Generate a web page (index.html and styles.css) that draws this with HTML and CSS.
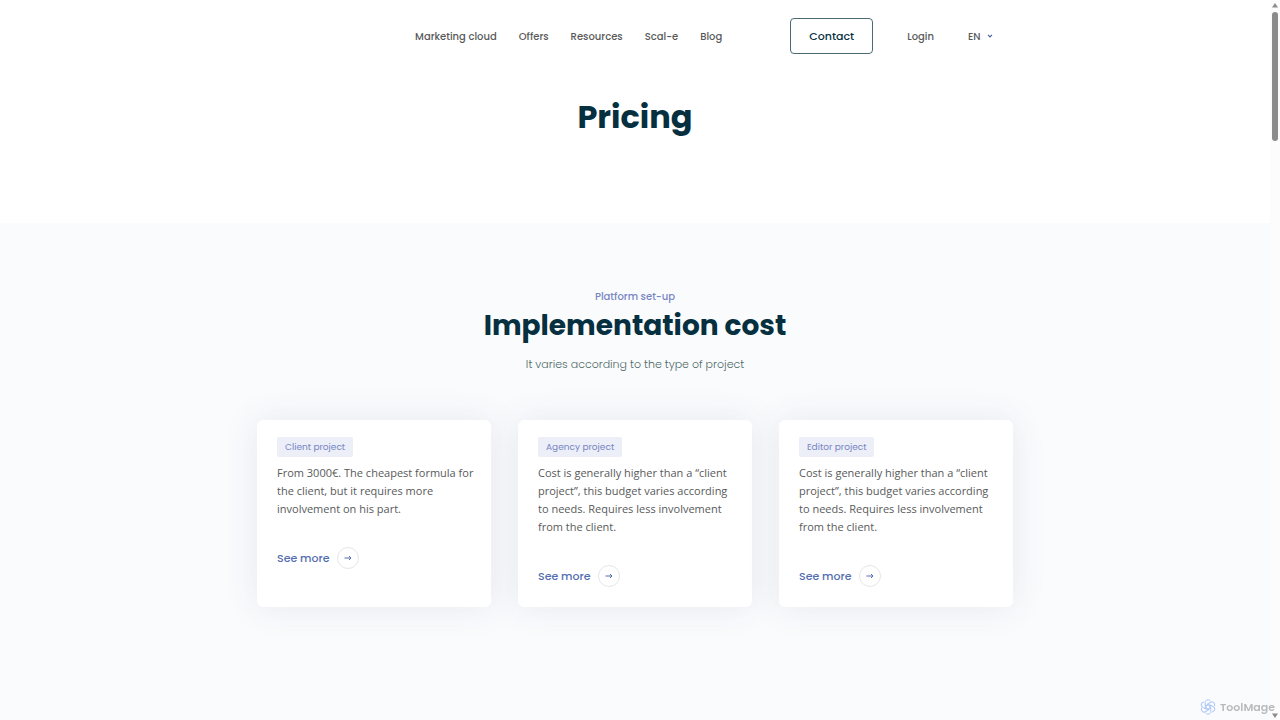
FILE: index.html
```html
<!DOCTYPE html>
<html lang="en">
<head>
    <meta charset="UTF-8">
    <meta name="viewport" content="width=device-width, initial-scale=1.0">
    <title>Pricing</title>
    <link rel="stylesheet" href="styles.css">
</head>
<body>
    <header class="header">
        <div class="topbar">
            <nav class="menu">
                <a href="#">Marketing cloud</a>
                <a href="#">Offers</a>
                <a href="#">Resources</a>
                <a href="#">Scal-e</a>
                <a href="#">Blog</a>
            </nav>
            <a class="contact" href="#">Contact</a>
            <a class="login" href="#">Login</a>
            <div class="language">
                <select aria-label="Language">
                    <option>EN</option>
                    <option>FR</option>
                </select>
                <svg class="chevron" viewBox="0 0 6 4"><path d="M1 .8l2 2 2-2"/></svg>
            </div>
        </div>
        <h1>Pricing</h1>
    </header>

    <main class="costs">
        <p class="eyebrow">Platform set-up</p>
        <h2>Implementation cost</h2>
        <p class="intro">It varies according to the type of project</p>
        <div class="cards">
            <article class="card">
                <span class="tag">Client project</span>
                <p>From 3000€. The cheapest formula for the client, but it requires more involvement on his part.</p>
                <a class="more" href="#">See more
                    <span class="circle"><svg viewBox="0 0 8 6"><path d="M.5 3h6.5M5 1l2 2-2 2"/></svg></span>
                </a>
            </article>
            <article class="card">
                <span class="tag">Agency project</span>
                <p>Cost is generally higher than a “client project”, this budget varies according to needs. Requires less involvement from the client.</p>
                <a class="more" href="#">See more
                    <span class="circle"><svg viewBox="0 0 8 6"><path d="M.5 3h6.5M5 1l2 2-2 2"/></svg></span>
                </a>
            </article>
            <article class="card">
                <span class="tag">Editor project</span>
                <p>Cost is generally higher than a “client project”, this budget varies according to needs. Requires less involvement from the client.</p>
                <a class="more" href="#">See more
                    <span class="circle"><svg viewBox="0 0 8 6"><path d="M.5 3h6.5M5 1l2 2-2 2"/></svg></span>
                </a>
            </article>
        </div>
    </main>

    <div class="watermark">
        <svg viewBox="0 0 16 16">
            <g id="petals">
                <path id="petal" d="M8 5.6L5.2 7.2V3.4C5.2 1.8 6.500 .8 8 .8c1.100 0 2 .5 2.500 1.300"/>
                <use href="#petal" transform="rotate(60 8 8)"/>
                <use href="#petal" transform="rotate(120 8 8)"/>
                <use href="#petal" transform="rotate(180 8 8)"/>
                <use href="#petal" transform="rotate(240 8 8)"/>
                <use href="#petal" transform="rotate(300 8 8)"/>
            </g>
            <circle cx="8" cy="8" r="2.200"/>
        </svg>
        ToolMage
    </div>

    <div class="scrollbar">
        <svg viewBox="0 0 6 5"><path d="M3 0l3 4.500H0z"/></svg>
        <div class="thumb"></div>
        <svg class="down" viewBox="0 0 6 5"><path d="M0 .5h6L3 5z"/></svg>
    </div>
</body>
</html>
```
FILE: styles.css
```css
*{
    box-sizing: border-box;
}

body{
    margin: 0;
    padding-right: 10px;
    min-height: 100vh;
    background-color: #fafbfd;
    font-family: Poppins, Inter, sans-serif;
    color: #585a5a;
}

a{
    color: inherit;
    text-decoration: none;
}

h1, h2, p{
    margin: 0;
}

.header{
    background-color: white;
    padding: 18px 0 84px;
    text-align: center;
}

.topbar{
    display: flex;
    align-items: center;
    justify-content: flex-end;
    max-width: 756px;
    margin: 0 auto;
    padding-right: 20px;
    font-size: 10px;
    font-weight: 500;
    line-height: 17px;
}

.menu{
    display: flex;
    gap: 22px;
    margin-right: 68px;
}

.contact{
    width: 83px;
    padding: 9px 0;
    border: 1px solid #4b6a73;
    border-radius: 4px;
    font-size: 11px;
    line-height: 16px;
    color: #06303f;
}

.login{
    margin-left: 34px;
}

.language{
    display: flex;
    align-items: center;
    gap: 4px;
    margin-left: 34px;
}

.language select{
    appearance: none;
    width: 15px;
    padding: 0;
    border: none;
    background: none;
    font: inherit;
    color: inherit;
}

.chevron{
    width: 6px;
    height: 4px;
    fill: none;
    stroke: #4a62a0;
    stroke-width: 1.2;
}

h1{
    margin-top: 40px;
    font-size: 32px;
    line-height: 45px;
    color: #06303f;
}

.costs{
    max-width: 756px;
    margin: 0 auto;
    padding: 66px 0 113px;
    text-align: center;
}

.eyebrow{
    font-size: 10px;
    font-weight: 500;
    line-height: 16px;
    color: #7885c4;
}

h2{
    margin-top: 1px;
    font-size: 28px;
    line-height: 40px;
    color: #06303f;
}

.intro{
    margin-top: 9px;
    font-size: 11px;
    font-weight: 300;
    line-height: 18px;
    color: #4f6967;
}

.cards{
    display: grid;
    grid-template-columns: repeat(3, 1fr);
    gap: 27px;
    margin-top: 47px;
}

.card{
    padding: 17px 14px 20px 20px;
    border-radius: 6px;
    background-color: white;
    box-shadow: 0 0 34px rgba(60, 70, 110, 0.1);
    text-align: left;
}

.card p{
    margin-top: 7px;
    font-family: "Open Sans", sans-serif;
    font-size: 11px;
    line-height: 18px;
}

.tag{
    display: block;
    width: fit-content;
    padding: 0 8px;
    border-radius: 2px;
    background-color: #eceff7;
    font-size: 9px;
    line-height: 20px;
    color: #7885c4;
}

.more{
    display: flex;
    align-items: center;
    gap: 7px;
    width: fit-content;
    margin-top: 29px;
    font-size: 11px;
    font-weight: 500;
    color: #536db0;
}

.circle{
    display: flex;
    align-items: center;
    justify-content: center;
    width: 22px;
    height: 22px;
    border: 1px solid #e5e6ea;
    border-radius: 50%;
}

.circle svg{
    width: 8px;
    height: 6px;
    fill: none;
    stroke: #536db0;
}

.watermark{
    position: fixed;
    right: 5px;
    bottom: 5px;
    display: flex;
    align-items: center;
    gap: 4px;
    font-size: 11px;
    font-weight: 600;
    line-height: 16px;
    color: #b9babc;
    z-index: 2;
}

.watermark svg{
    width: 16px;
    height: 16px;
    fill: none;
    stroke: #aec8f5;
}

.scrollbar{
    position: fixed;
    top: 0;
    right: 0;
    bottom: 0;
    display: flex;
    flex-direction: column;
    align-items: center;
    width: 10px;
    padding: 3px 0 2px;
    background-color: #fcfcfc;
}

.scrollbar svg{
    width: 6px;
    height: 5px;
    fill: #8b8b8b;
}

.thumb{
    width: 6px;
    height: 18%;
    margin-top: 4px;
    border-radius: 3px;
    background-color: #8b8b8b;
}

.down{
    margin-top: auto;
}
```
